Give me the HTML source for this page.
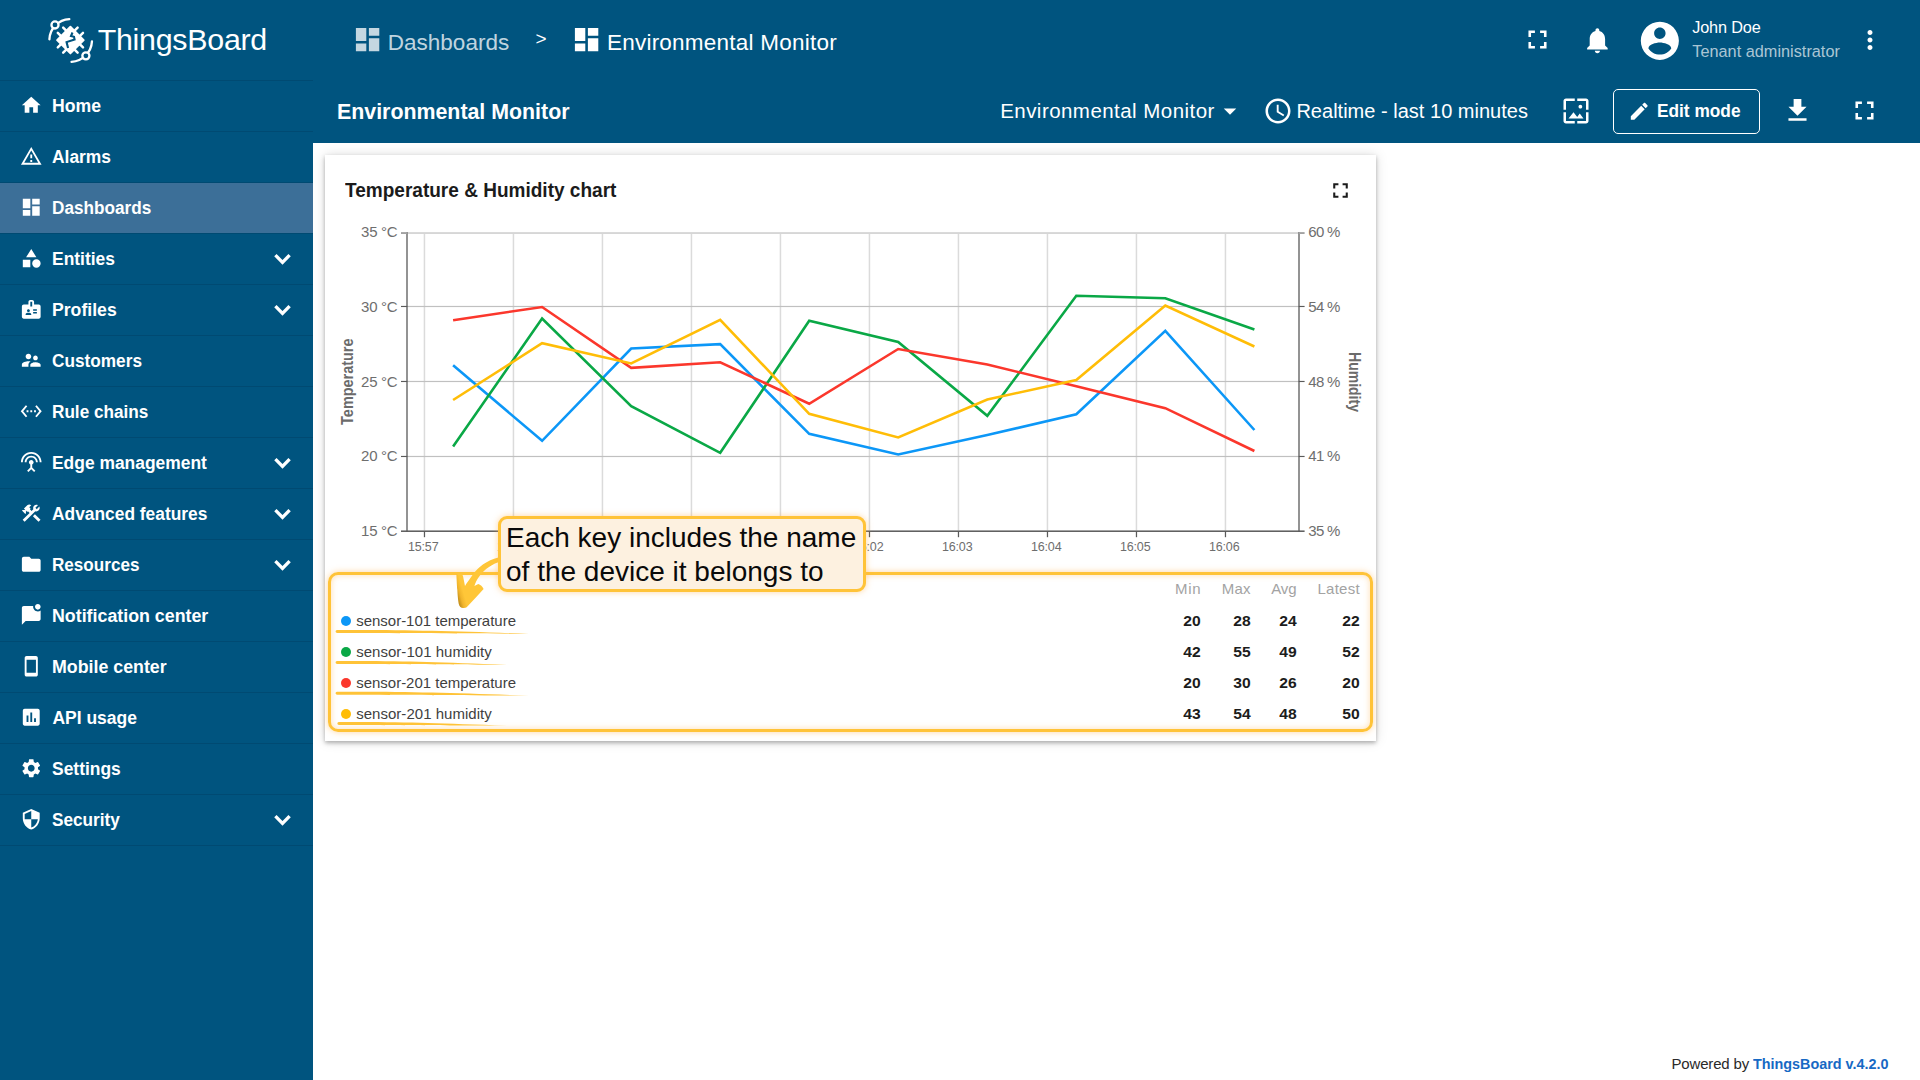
<!DOCTYPE html>
<html lang="en"><head><meta charset="utf-8"><title>ThingsBoard - Environmental Monitor</title>
<style>
html,body{margin:0;padding:0;}
body{width:1920px;height:1080px;overflow:hidden;background:#fff;font-family:'Liberation Sans',sans-serif;position:relative;}
.t{position:absolute;white-space:pre;line-height:1;font-family:'Liberation Sans',sans-serif;}
.abs{position:absolute;}
svg{position:absolute;overflow:visible;}

#side{left:0;top:0;width:313px;height:1080px;background:#00547f;}
#top{left:313px;top:0;width:1607px;height:143px;background:#00547f;}
.div{position:absolute;left:0;width:313px;height:1px;background:#004a72;}
#active{left:0;top:183px;width:313px;height:50px;background:#3c6f98;}
#card{left:325px;top:155px;width:1051px;height:586px;background:#fff;box-shadow:0 2px 4px rgba(0,0,0,.28),0 0 12px rgba(0,0,0,.13);}
#editbtn{left:1613px;top:89px;width:145px;height:43px;border:1px solid #fff;border-radius:5px;}
#hl{left:328px;top:572.2px;width:1039px;height:153.8px;border:3px solid #ffc338;border-radius:10px;box-shadow:0 0 6px rgba(255,176,70,.5), inset 0 0 6px rgba(255,176,70,.42);}
#callout{left:498.3px;top:516px;width:362px;height:70px;border:3px solid #ffc338;border-radius:9px;background:#fdf1e0;box-shadow:0 0 6px rgba(255,176,70,.5);z-index:5;}
.dot{position:absolute;width:10.4px;height:10.4px;border-radius:50%;}

</style></head><body>
<div id="side" class="abs"></div><div id="top" class="abs"></div>
<div id="active" class="abs"></div>
<div class="div" style="top:80px"></div>
<div class="div" style="top:131px"></div>
<div class="div" style="top:182px"></div>
<div class="div" style="top:233px"></div>
<div class="div" style="top:284px"></div>
<div class="div" style="top:335px"></div>
<div class="div" style="top:386px"></div>
<div class="div" style="top:437px"></div>
<div class="div" style="top:488px"></div>
<div class="div" style="top:539px"></div>
<div class="div" style="top:590px"></div>
<div class="div" style="top:641px"></div>
<div class="div" style="top:692px"></div>
<div class="div" style="top:743px"></div>
<div class="div" style="top:794px"></div>
<div class="div" style="top:845px"></div>
<svg style="left:0;top:0" width="313" height="80" viewBox="0 0 313 80"><path d="M69.30 19.13 A21.0 21.0 0 0 0 49.41 39.37" fill="none" stroke="#fff" stroke-width="2.3" stroke-linecap="round"/><path d="M91.96 41.42 A21.9 21.9 0 0 1 71.55 61.97" fill="none" stroke="#fff" stroke-width="2.3" stroke-linecap="round"/><circle cx="54.99" cy="24.96" r="3.55" fill="#00547f" stroke="#fff" stroke-width="2.3"/><circle cx="85.89" cy="55.86" r="3.55" fill="#00547f" stroke="#fff" stroke-width="2.3"/><g transform="translate(70.4 40.1) rotate(45)"><rect x="-10.35" y="-10.35" width="20.7" height="20.7" rx="0.9" fill="#fff"/><path d="M-3.8 -14.0V14.0M-14.0 -3.8H14.0" stroke="#fff" stroke-width="2.5" stroke-linecap="round" fill="none"/><path d="M3.8 -14.0V14.0M-14.0 3.8H14.0" stroke="#fff" stroke-width="2.5" stroke-linecap="round" fill="none"/></g><polyline points="72.50,32.50 71.00,36.00 74.00,36.78 74.56,39.56 66.56,42.11 68.06,47.89" fill="none" stroke="#00547f" stroke-width="2.1" stroke-linejoin="miter" stroke-linecap="butt"/></svg>
<svg style="left:19.95px;top:94.15px;" width="22.5" height="22.5" viewBox="0 0 24 24"><path fill="#fff" d="M10 20v-6h4v6h5v-8h3L12 3 2 12h3v8z"/></svg>
<svg style="left:19.95px;top:145.15px;" width="22.5" height="22.5" viewBox="0 0 24 24"><path fill="#fff" d="M12 5.99L19.53 19H4.47L12 5.99M12 2L1 21h22L12 2zm1 14h-2v2h2v-2zm0-6h-2v4h2v-4z"/></svg>
<svg style="left:19.95px;top:196.15px;" width="22.5" height="22.5" viewBox="0 0 24 24"><path fill="#fff" d="M3 13h8V3H3v10zm0 8h8v-6H3v6zm10 0h8V11h-8v10zm0-18v6h8V3h-8z"/></svg>
<svg style="left:19.95px;top:247.15px;" width="22.5" height="22.5" viewBox="0 0 24 24"><path fill="#fff" d="M12 2l-5.5 9h11L12 2zM17.5 13a4.5 4.5 0 1 0 0 9 4.5 4.5 0 1 0 0-9zM3 13.5h8v8H3v-8z"/></svg>
<svg style="left:19.95px;top:298.15px;" width="22.5" height="22.5" viewBox="0 0 24 24"><path fill="#fff" d="M20 7h-5V4c0-1.1-.9-2-2-2h-2c-1.1 0-2 .9-2 2v3H4c-1.1 0-2 .9-2 2v11c0 1.1.9 2 2 2h16c1.1 0 2-.9 2-2V9c0-1.1-.9-2-2-2zM9 12c.83 0 1.5.67 1.5 1.5S9.83 15 9 15s-1.5-.67-1.5-1.500S8.170 12 9 12zm3 6H6v-.75c0-1 2-1.5 3-1.5s3 .5 3 1.5V18zm1-9h-2V4h2v5zm5 7.5h-4V15h4v1.5zm0-3h-4V12h4v1.5z"/></svg>
<svg style="left:19.95px;top:349.15px;" width="22.5" height="22.5" viewBox="0 0 24 24"><path fill="#fff" d="M16.5 12c1.38 0 2.49-1.12 2.49-2.5S17.88 7 16.5 7C15.12 7 14 8.12 14 9.5s1.120 2.500 2.500 2.500zM9 11c1.660 0 2.990-1.340 2.990-3S10.660 5 9 5C7.340 5 6 6.340 6 8s1.340 3 3 3zm7.500 3c-1.830 0-5.500.920-5.500 2.750V19h11v-2.250c0-1.830-3.670-2.750-5.500-2.750zM9 13c-2.330 0-7 1.170-7 3.500V19h7v-2.250c0-.850.330-2.340 2.370-3.470C10.500 13.100 9.660 13 9 13z"/></svg>
<svg style="left:19.95px;top:400.15px;" width="22.5" height="22.5" viewBox="0 0 24 24"><path fill="#fff" d="M7.77 6.76L6.23 5.48.82 12l5.41 6.52 1.54-1.28L3.42 12l4.35-5.240zM7 13h2v-2H7v2zm10-2h-2v2h2v-2zm-6 2h2v-2h-2v2zm6.770-7.520l-1.540 1.280L20.580 12l-4.350 5.240 1.540 1.280L23.180 12l-5.410-6.520z"/></svg>
<svg style="left:19.95px;top:451.15px;" width="22.5" height="22.5" viewBox="0 0 24 24"><path fill="#fff" d="M12 5c-3.870 0-7 3.130-7 7h2c0-2.760 2.240-5 5-5s5 2.240 5 5h2c0-3.870-3.130-7-7-7zm1 9.290c.880-.390 1.500-1.260 1.500-2.290 0-1.380-1.120-2.500-2.500-2.500S9.500 10.620 9.500 12c0 1.020.620 1.900 1.500 2.290v3.300L7.590 21 9 22.410l3-3 3 3L16.410 21 13 17.590v-3.300zM12 1C5.930 1 1 5.930 1 12h2c0-4.970 4.030-9 9-9s9 4.030 9 9h2c0-6.070-4.930-11-11-11z"/></svg>
<svg style="left:19.95px;top:502.15px;" width="22.5" height="22.5" viewBox="0 0 24 24"><path fill="#fff" d="M13.783 15.172l2.121-2.121 5.996 5.996-2.121 2.121zM17.5 10c1.930 0 3.500-1.570 3.500-3.500 0-.580-.160-1.120-.410-1.600l-2.700 2.700-1.490-1.490 2.700-2.700c-.480-.250-1.020-.410-1.600-.410C15.570 3 14 4.570 14 6.500c0 .410.080.800.210 1.160l-1.850 1.850-1.780-1.780.710-.710-1.410-1.410L12 3.490c-1.170-1.170-3.070-1.170-4.240 0L4.220 7.030l1.410 1.410H2.810l-.710.710 3.540 3.540.710-.710V9.150l1.410 1.410.710-.710 1.780 1.780-7.410 7.410 2.120 2.120L16.340 9.790c.360.130.750.210 1.160.210z"/></svg>
<svg style="left:19.95px;top:553.15px;" width="22.5" height="22.5" viewBox="0 0 24 24"><path fill="#fff" d="M10 4H4c-1.100 0-1.990.900-1.990 2L2 18c0 1.100.900 2 2 2h16c1.100 0 2-.900 2-2V8c0-1.100-.900-2-2-2h-8l-2-2z"/></svg>
<svg style="left:19.95px;top:604.15px;" width="22.5" height="22.5" viewBox="0 0 24 24"><path fill="#fff" d="M22 6.980V16c0 1.100-.900 2-2 2H6l-4 4V4c0-1.100.900-2 2-2h10.100c-.060.320-.100.660-.100 1 0 2.760 2.240 5 5 5 1.130 0 2.160-.390 3-1.020zM16 3c0 1.660 1.340 3 3 3s3-1.340 3-3-1.340-3-3-3-3 1.340-3 3z"/></svg>
<svg style="left:19.95px;top:655.15px;" width="22.5" height="22.5" viewBox="0 0 24 24"><path fill="#fff" d="M17 1.010L7 1c-1.100 0-2 .900-2 2v18c0 1.100.900 2 2 2h10c1.100 0 2-.900 2-2V3c0-1.100-.900-1.990-2-1.990zM17 19H7V5h10v14z"/></svg>
<svg style="left:19.95px;top:706.15px;" width="22.5" height="22.5" viewBox="0 0 24 24"><path fill="#fff" d="M19 3H5c-1.100 0-2 .900-2 2v14c0 1.100.900 2 2 2h14c1.100 0 2-.900 2-2V5c0-1.100-.900-2-2-2zM9 17H7v-7h2v7zm4 0h-2V7h2v10zm4 0h-2v-4h2v4z"/></svg>
<svg style="left:19.95px;top:757.15px;" width="22.5" height="22.5" viewBox="0 0 24 24"><path fill="#fff" d="M19.140 12.940c.040-.300.060-.610.060-.940 0-.320-.020-.640-.070-.940l2.030-1.580c.180-.140.230-.410.120-.610l-1.920-3.320c-.120-.220-.370-.290-.590-.220l-2.390.960c-.500-.380-1.030-.700-1.620-.940l-.360-2.540c-.040-.240-.240-.410-.480-.410h-3.840c-.240 0-.430.170-.470.410l-.360 2.540c-.590.240-1.130.570-1.620.940l-2.390-.960c-.220-.080-.470 0-.590.220L2.740 8.870c-.120.210-.080.470.120.610l2.030 1.580c-.050.300-.090.630-.090.940s.020.640.070.940l-2.030 1.580c-.180.140-.230.410-.120.610l1.920 3.320c.120.220.370.290.590.220l2.390-.960c.500.380 1.030.700 1.620.940l.360 2.540c.050.240.240.410.480.410h3.840c.240 0 .440-.170.470-.410l.360-2.540c.590-.240 1.130-.560 1.620-.940l2.390.960c.220.080.470 0 .590-.220l1.920-3.320c.120-.220.070-.470-.120-.610l-2.010-1.580zM12 15.600c-1.980 0-3.600-1.620-3.600-3.600s1.620-3.600 3.600-3.600 3.600 1.620 3.600 3.600-1.620 3.600-3.600 3.600z"/></svg>
<svg style="left:19.95px;top:808.15px;" width="22.5" height="22.5" viewBox="0 0 24 24"><path fill="#fff" d="M12 1L3 5v6c0 5.550 3.840 10.740 9 12 5.160-1.260 9-6.450 9-12V5l-9-4zm0 10.990h7c-.530 4.120-3.280 7.790-7 8.940V12H5V6.300l7-3.110v8.800z"/></svg>
<svg style="left:0;top:0" width="313" height="1080" viewBox="0 0 313 1080"><polyline points="275.4,255.2 282.5,262.5 289.6,255.2" fill="none" stroke="#fff" stroke-width="3.3" stroke-linejoin="miter" stroke-linecap="butt"/><polyline points="275.4,306.2 282.5,313.5 289.6,306.2" fill="none" stroke="#fff" stroke-width="3.3" stroke-linejoin="miter" stroke-linecap="butt"/><polyline points="275.4,459.2 282.5,466.5 289.6,459.2" fill="none" stroke="#fff" stroke-width="3.3" stroke-linejoin="miter" stroke-linecap="butt"/><polyline points="275.4,510.2 282.5,517.5 289.6,510.2" fill="none" stroke="#fff" stroke-width="3.3" stroke-linejoin="miter" stroke-linecap="butt"/><polyline points="275.4,561.2 282.5,568.5 289.6,561.2" fill="none" stroke="#fff" stroke-width="3.3" stroke-linejoin="miter" stroke-linecap="butt"/><polyline points="275.4,816.2 282.5,823.5 289.6,816.2" fill="none" stroke="#fff" stroke-width="3.3" stroke-linejoin="miter" stroke-linecap="butt"/></svg>
<svg style="left:351.80px;top:24.30px;" width="31.2" height="31.2" viewBox="0 0 24 24"><path fill="rgba(255,255,255,0.77)" d="M3 13h8V3H3v10zm0 8h8v-6H3v6zm10 0h8V11h-8v10zm0-18v6h8V3h-8z"/></svg>
<svg style="left:571.30px;top:24.30px;" width="31.2" height="31.2" viewBox="0 0 24 24"><path fill="#fff" d="M3 13h8V3H3v10zm0 8h8v-6H3v6zm10 0h8V11h-8v10zm0-18v6h8V3h-8z"/></svg>
<svg style="left:1521.90px;top:24.30px;" width="31" height="31" viewBox="0 0 24 24"><path fill="#fff" d="M7 14H5v5h5v-2H7v-3zm-2-4h2V7h3V5H5v5zm12 7h-3v2h5v-5h-2v3zM14 5v2h3v3h2V5h-5z"/></svg>
<svg style="left:1582.00px;top:24.80px;" width="30.8" height="30.8" viewBox="0 0 24 24"><path fill="#fff" d="M12 22c1.100 0 2-.900 2-2h-4c0 1.100.890 2 2 2zm6-6v-5c0-3.070-1.640-5.640-4.500-6.320V4c0-.830-.670-1.500-1.500-1.500s-1.500.670-1.500 1.500v.680C7.630 5.360 6 7.920 6 11v5l-2 2v1h16v-1l-2-2z"/></svg>
<svg style="left:1636.85px;top:17.65px;" width="45.7" height="45.7" viewBox="0 0 24 24"><path fill="#fff" d="M12 2C6.480 2 2 6.480 2 12s4.480 10 10 10 10-4.480 10-10S17.520 2 12 2zm0 3c1.660 0 3 1.340 3 3s-1.340 3-3 3-3-1.340-3-3 1.340-3 3-3zm0 14.200c-2.500 0-4.710-1.280-6-3.220.030-1.990 4-3.080 6-3.080 1.990 0 5.970 1.090 6 3.080-1.290 1.940-3.500 3.220-6 3.220z"/></svg>
<svg style="left:1855.00px;top:25.00px;" width="30" height="30" viewBox="0 0 24 24"><path fill="#fff" d="M12 8c1.100 0 2-.900 2-2s-.900-2-2-2-2 .900-2 2 .900 2 2 2zm0 2c-1.100 0-2 .900-2 2s.900 2 2 2 2-.900 2-2-.900-2-2-2zm0 6c-1.100 0-2 .900-2 2s.900 2 2 2 2-.900 2-2-.900-2-2-2z"/></svg>
<svg style="left:1215.10px;top:95.70px;" width="30" height="30" viewBox="0 0 24 24"><path fill="#fff" d="M7 10l5 5 5-5z"/></svg>
<svg style="left:1262.60px;top:96.00px;" width="30" height="30" viewBox="0 0 24 24"><path fill="#fff" d="M11.990 2C6.470 2 2 6.480 2 12s4.470 10 9.990 10C17.520 22 22 17.520 22 12S17.520 2 11.990 2zM12 20c-4.420 0-8-3.580-8-8s3.580-8 8-8 8 3.580 8 8-3.580 8-8 8zm.500-13H11v6l5.250 3.150.750-1.230-4.500-2.670z"/></svg>
<svg style="left:1560.80px;top:96.20px;" width="30" height="30" viewBox="0 0 24 24"><path fill="#fff" d="M4 4h7V2H4c-1.100 0-2 .900-2 2v7h2V4zm6 9l-4 5h12l-3-4-2.030 2.710L10 13zm7-4.500c0-.830-.670-1.500-1.500-1.500S14 7.670 14 8.500s.670 1.500 1.500 1.500S17 9.330 17 8.500zM20 2h-7v2h7v7h2V4c0-1.100-.900-2-2-2zm0 18h-7v2h7c1.100 0 2-.900 2-2v-7h-2v7zM4 13H2v7c0 1.100.900 2 2 2h7v-2H4v-7z"/></svg>
<div id="editbtn" class="abs"></div>
<svg style="left:1628.05px;top:100.05px;" width="22.5" height="22.5" viewBox="0 0 24 24"><path fill="#fff" d="M3 17.250V21h3.750L17.810 9.940l-3.750-3.750L3 17.250zM20.710 7.040c.390-.390.390-1.020 0-1.410l-2.340-2.340c-.390-.390-1.020-.390-1.410 0l-1.830 1.830 3.750 3.750 1.830-1.830z"/></svg>
<svg style="left:1782.00px;top:95.20px;" width="31" height="31" viewBox="0 0 24 24"><path fill="#fff" d="M19 9h-4V3H9v6H5l7 7 7-7zM5 18v2h14v-2H5z"/></svg>
<svg style="left:1849.30px;top:95.30px;" width="31" height="31" viewBox="0 0 24 24"><path fill="#fff" d="M7 14H5v5h5v-2H7v-3zm-2-4h2V7h3V5H5v5zm12 7h-3v2h5v-5h-2v3zM14 5v2h3v3h2V5h-5z"/></svg>
<div id="card" class="abs"></div>
<svg style="left:1328.30px;top:178.10px;" width="25" height="25" viewBox="0 0 24 24"><path fill="#1b1b1b" d="M7 14H5v5h5v-2H7v-3zm-2-4h2V7h3V5H5v5zm12 7h-3v2h5v-5h-2v3zM14 5v2h3v3h2V5h-5z"/></svg>
<svg style="left:0;top:0" width="1920" height="1080" viewBox="0 0 1920 1080"><rect x="423.70" y="233" width="1.5" height="297.5" fill="#dbdbdb"/><rect x="512.70" y="233" width="1.5" height="297.5" fill="#dbdbdb"/><rect x="601.70" y="233" width="1.5" height="297.5" fill="#dbdbdb"/><rect x="690.70" y="233" width="1.5" height="297.5" fill="#dbdbdb"/><rect x="779.70" y="233" width="1.5" height="297.5" fill="#dbdbdb"/><rect x="868.70" y="233" width="1.5" height="297.5" fill="#dbdbdb"/><rect x="957.70" y="233" width="1.5" height="297.5" fill="#dbdbdb"/><rect x="1046.70" y="233" width="1.5" height="297.5" fill="#dbdbdb"/><rect x="1135.70" y="233" width="1.5" height="297.5" fill="#dbdbdb"/><rect x="1224.70" y="233" width="1.5" height="297.5" fill="#dbdbdb"/><rect x="408" y="232.1" width="890" height="1.9" fill="#d6d6d6"/><rect x="408" y="305.88" width="890" height="1.2" fill="#c0c0c0"/><rect x="408" y="380.88" width="890" height="1.2" fill="#c0c0c0"/><rect x="408" y="455.88" width="890" height="1.2" fill="#c0c0c0"/><rect x="406" y="232" width="2" height="299.8" fill="#939393"/><rect x="1298" y="232" width="2" height="299.8" fill="#939393"/><rect x="401" y="530.45" width="903.6" height="1.5" fill="#5a5a5a"/><rect x="401" y="232.1" width="6" height="1.9" fill="#a2a2a2"/><rect x="1299" y="232.1" width="5.6" height="1.9" fill="#a2a2a2"/><rect x="401" y="305.9" width="6.5" height="1.15" fill="#5a5a5a"/><rect x="1298.5" y="305.9" width="6.1" height="1.15" fill="#5a5a5a"/><rect x="401" y="380.9" width="6.5" height="1.15" fill="#5a5a5a"/><rect x="1298.5" y="380.9" width="6.1" height="1.15" fill="#5a5a5a"/><rect x="401" y="455.9" width="6.5" height="1.15" fill="#5a5a5a"/><rect x="1298.5" y="455.9" width="6.1" height="1.15" fill="#5a5a5a"/><rect x="423.85" y="531" width="1.25" height="6.2" fill="#5a5a5a"/><rect x="512.85" y="531" width="1.25" height="6.2" fill="#5a5a5a"/><rect x="601.85" y="531" width="1.25" height="6.2" fill="#5a5a5a"/><rect x="690.85" y="531" width="1.25" height="6.2" fill="#5a5a5a"/><rect x="779.85" y="531" width="1.25" height="6.2" fill="#5a5a5a"/><rect x="868.85" y="531" width="1.25" height="6.2" fill="#5a5a5a"/><rect x="957.85" y="531" width="1.25" height="6.2" fill="#5a5a5a"/><rect x="1046.85" y="531" width="1.25" height="6.2" fill="#5a5a5a"/><rect x="1135.85" y="531" width="1.25" height="6.2" fill="#5a5a5a"/><rect x="1224.85" y="531" width="1.25" height="6.2" fill="#5a5a5a"/><polyline points="453.1,365.2 542.1,440.8 631.2,348.5 720.2,344.2 809.2,433.8 898.2,454.5 987.3,435.0 1076.3,414.2 1165.3,330.8 1254.4,430.0" fill="none" stroke="#0c97f7" stroke-width="2.6" stroke-linejoin="miter" stroke-linecap="butt"/><polyline points="453.1,446.5 542.1,318.5 631.2,406.2 720.2,452.8 809.2,320.8 898.2,342.0 987.3,415.8 1076.3,295.8 1165.3,298.2 1254.4,329.5" fill="none" stroke="#0aa846" stroke-width="2.6" stroke-linejoin="miter" stroke-linecap="butt"/><polyline points="453.1,320.2 542.1,307.0 631.2,367.8 720.2,362.2 809.2,403.8 898.2,349.0 987.3,364.5 1076.3,386.2 1165.3,408.2 1254.4,451.0" fill="none" stroke="#fb372c" stroke-width="2.6" stroke-linejoin="miter" stroke-linecap="butt"/><polyline points="453.1,400.0 542.1,343.2 631.2,363.5 720.2,319.8 809.2,413.8 898.2,437.5 987.3,399.5 1076.3,380.0 1165.3,305.5 1254.4,346.5" fill="none" stroke="#ffbd07" stroke-width="2.6" stroke-linejoin="miter" stroke-linecap="butt"/><text x="0" y="0" transform="translate(352.6 381.7) rotate(-90)" text-anchor="middle" font-family="Liberation Sans, sans-serif" font-size="16.25" font-weight="700" fill="#6b6b6b" textLength="86.4" lengthAdjust="spacingAndGlyphs">Temperature</text><text x="0" y="0" transform="translate(1349.0 382.0) rotate(90)" text-anchor="middle" font-family="Liberation Sans, sans-serif" font-size="16.25" font-weight="700" fill="#6b6b6b" textLength="59.8" lengthAdjust="spacingAndGlyphs">Humidity</text></svg>
<div class="dot" style="left:340.8px;top:615.6px;background:#0c97f7"></div>
<div class="dot" style="left:340.8px;top:646.6px;background:#0aa846"></div>
<div class="dot" style="left:340.8px;top:677.6px;background:#fb372c"></div>
<div class="dot" style="left:340.8px;top:708.6px;background:#ffbd07"></div>
<span class="t" style="left:97.70px;top:24.27px;font-size:30.4px;color:#fff;letter-spacing:-0.275px;">ThingsBoard</span>
<span class="t" style="left:52.40px;top:98.19px;font-size:17.5px;color:#fff;font-weight:700;transform:scaleX(1.0077);transform-origin:0 0;">Home</span>
<span class="t" style="left:52.40px;top:149.19px;font-size:17.5px;color:#fff;font-weight:700;transform:scaleX(0.9942);transform-origin:0 0;">Alarms</span>
<span class="t" style="left:52.40px;top:200.19px;font-size:17.5px;color:#fff;font-weight:700;transform:scaleX(0.9808);transform-origin:0 0;">Dashboards</span>
<span class="t" style="left:52.40px;top:251.19px;font-size:17.5px;color:#fff;font-weight:700;transform:scaleX(0.9965);transform-origin:0 0;">Entities</span>
<span class="t" style="left:52.40px;top:302.19px;font-size:17.5px;color:#fff;font-weight:700;transform:scaleX(1.0077);transform-origin:0 0;">Profiles</span>
<span class="t" style="left:52.40px;top:353.19px;font-size:17.5px;color:#fff;font-weight:700;transform:scaleX(0.9844);transform-origin:0 0;">Customers</span>
<span class="t" style="left:52.40px;top:404.19px;font-size:17.5px;color:#fff;font-weight:700;transform:scaleX(0.9803);transform-origin:0 0;">Rule chains</span>
<span class="t" style="left:52.40px;top:455.19px;font-size:17.5px;color:#fff;font-weight:700;transform:scaleX(0.9954);transform-origin:0 0;">Edge management</span>
<span class="t" style="left:52.40px;top:506.19px;font-size:17.5px;color:#fff;font-weight:700;transform:scaleX(0.9924);transform-origin:0 0;">Advanced features</span>
<span class="t" style="left:52.40px;top:557.19px;font-size:17.5px;color:#fff;font-weight:700;transform:scaleX(0.9765);transform-origin:0 0;">Resources</span>
<span class="t" style="left:52.40px;top:608.19px;font-size:17.5px;color:#fff;font-weight:700;transform:scaleX(1.0173);transform-origin:0 0;">Notification center</span>
<span class="t" style="left:52.40px;top:659.19px;font-size:17.5px;color:#fff;font-weight:700;transform:scaleX(1.0167);transform-origin:0 0;">Mobile center</span>
<span class="t" style="left:52.40px;top:710.19px;font-size:17.5px;color:#fff;font-weight:700;">API usage</span>
<span class="t" style="left:52.40px;top:761.19px;font-size:17.5px;color:#fff;font-weight:700;transform:scaleX(0.9964);transform-origin:0 0;">Settings</span>
<span class="t" style="left:52.40px;top:812.19px;font-size:17.5px;color:#fff;font-weight:700;transform:scaleX(0.9832);transform-origin:0 0;">Security</span>
<span class="t" style="left:387.70px;top:31.95px;font-size:22.5px;color:rgba(255,255,255,0.77);letter-spacing:0.027px;">Dashboards</span>
<span class="t" style="left:535.50px;top:29.12px;font-size:19px;color:#fff;">&gt;</span>
<span class="t" style="left:606.90px;top:31.95px;font-size:22.5px;color:#fff;letter-spacing:0.242px;">Environmental Monitor</span>
<span class="t" style="left:1692.20px;top:19.14px;font-size:16.25px;color:#fff;letter-spacing:-0.145px;">John Doe</span>
<span class="t" style="left:1692.30px;top:43.04px;font-size:16.25px;color:rgba(255,255,255,0.68);letter-spacing:0.018px;">Tenant administrator</span>
<span class="t" style="left:337.30px;top:100.65px;font-size:22.5px;color:#fff;font-weight:700;transform:scaleX(0.9489);transform-origin:0 0;">Environmental Monitor</span>
<span class="t" style="left:1000.20px;top:100.55px;font-size:20.5px;color:#fff;letter-spacing:0.453px;">Environmental Monitor</span>
<span class="t" style="left:1296.40px;top:100.97px;font-size:20px;color:#fff;letter-spacing:0.015px;">Realtime - last 10 minutes</span>
<span class="t" style="left:1657.00px;top:102.59px;font-size:17.5px;color:#fff;font-weight:700;transform:scaleX(0.9871);transform-origin:0 0;">Edit mode</span>
<span class="t" style="left:344.90px;top:179.57px;font-size:20px;color:#1b1b1b;font-weight:700;transform:scaleX(0.9514);transform-origin:0 0;">Temperature &amp; Humidity chart</span>
<span class="t" style="left:361.10px;top:223.50px;font-size:15px;color:#6e6e6e;letter-spacing:-0.297px;">35 °C</span>
<span class="t" style="left:361.10px;top:298.50px;font-size:15px;color:#6e6e6e;letter-spacing:-0.297px;">30 °C</span>
<span class="t" style="left:361.10px;top:373.50px;font-size:15px;color:#6e6e6e;letter-spacing:-0.297px;">25 °C</span>
<span class="t" style="left:361.10px;top:448.10px;font-size:15px;color:#6e6e6e;letter-spacing:-0.297px;">20 °C</span>
<span class="t" style="left:361.10px;top:522.90px;font-size:15px;color:#6e6e6e;letter-spacing:-0.297px;">15 °C</span>
<span class="t" style="left:1308.30px;top:223.50px;font-size:15px;color:#6e6e6e;letter-spacing:-0.676px;">60 %</span>
<span class="t" style="left:1308.30px;top:298.50px;font-size:15px;color:#6e6e6e;letter-spacing:-0.676px;">54 %</span>
<span class="t" style="left:1308.30px;top:373.50px;font-size:15px;color:#6e6e6e;letter-spacing:-0.676px;">48 %</span>
<span class="t" style="left:1308.30px;top:448.10px;font-size:15px;color:#6e6e6e;letter-spacing:-0.676px;">41 %</span>
<span class="t" style="left:1308.30px;top:522.90px;font-size:15px;color:#6e6e6e;letter-spacing:-0.676px;">35 %</span>
<span class="t" style="left:407.90px;top:541.22px;font-size:12.5px;color:#6e6e6e;letter-spacing:-0.136px;">15:57</span>
<span class="t" style="left:496.90px;top:541.22px;font-size:12.5px;color:#6e6e6e;letter-spacing:-0.136px;">15:58</span>
<span class="t" style="left:585.90px;top:541.22px;font-size:12.5px;color:#6e6e6e;letter-spacing:-0.136px;">15:59</span>
<span class="t" style="left:674.90px;top:541.22px;font-size:12.5px;color:#6e6e6e;letter-spacing:-0.136px;">16:00</span>
<span class="t" style="left:763.90px;top:541.22px;font-size:12.5px;color:#6e6e6e;letter-spacing:-0.136px;">16:01</span>
<span class="t" style="left:852.90px;top:541.22px;font-size:12.5px;color:#6e6e6e;letter-spacing:-0.136px;">16:02</span>
<span class="t" style="left:941.90px;top:541.22px;font-size:12.5px;color:#6e6e6e;letter-spacing:-0.136px;">16:03</span>
<span class="t" style="left:1030.90px;top:541.22px;font-size:12.5px;color:#6e6e6e;letter-spacing:-0.136px;">16:04</span>
<span class="t" style="left:1119.90px;top:541.22px;font-size:12.5px;color:#6e6e6e;letter-spacing:-0.136px;">16:05</span>
<span class="t" style="left:1208.90px;top:541.22px;font-size:12.5px;color:#6e6e6e;letter-spacing:-0.136px;">16:06</span>
<span class="t" style="left:1175.08px;top:580.80px;font-size:15px;color:#a3a3a3;letter-spacing:0.676px;">Min</span>
<span class="t" style="left:1221.82px;top:580.80px;font-size:15px;color:#a3a3a3;letter-spacing:0.219px;">Max</span>
<span class="t" style="left:1271.14px;top:580.80px;font-size:15px;color:#a3a3a3;letter-spacing:-0.059px;">Avg</span>
<span class="t" style="left:1317.45px;top:580.80px;font-size:15px;color:#a3a3a3;letter-spacing:0.254px;">Latest</span>
<span class="t" style="left:356.20px;top:613.10px;font-size:15px;color:#3f3f3f;letter-spacing:-0.013px;">sensor-101 temperature</span>
<span class="t" style="left:1183.91px;top:612.70px;font-size:15px;color:#1c1c1c;font-weight:700;transform:scaleX(1.0427);transform-origin:100% 0;">20</span>
<span class="t" style="left:1233.91px;top:612.70px;font-size:15px;color:#1c1c1c;font-weight:700;transform:scaleX(1.0427);transform-origin:100% 0;">28</span>
<span class="t" style="left:1279.91px;top:612.70px;font-size:15px;color:#1c1c1c;font-weight:700;transform:scaleX(1.0427);transform-origin:100% 0;">24</span>
<span class="t" style="left:1342.91px;top:612.70px;font-size:15px;color:#1c1c1c;font-weight:700;transform:scaleX(1.0427);transform-origin:100% 0;">22</span>
<span class="t" style="left:356.20px;top:644.10px;font-size:15px;color:#3f3f3f;letter-spacing:0.027px;">sensor-101 humidity</span>
<span class="t" style="left:1183.91px;top:643.70px;font-size:15px;color:#1c1c1c;font-weight:700;transform:scaleX(1.0427);transform-origin:100% 0;">42</span>
<span class="t" style="left:1233.91px;top:643.70px;font-size:15px;color:#1c1c1c;font-weight:700;transform:scaleX(1.0427);transform-origin:100% 0;">55</span>
<span class="t" style="left:1279.91px;top:643.70px;font-size:15px;color:#1c1c1c;font-weight:700;transform:scaleX(1.0427);transform-origin:100% 0;">49</span>
<span class="t" style="left:1342.91px;top:643.70px;font-size:15px;color:#1c1c1c;font-weight:700;transform:scaleX(1.0427);transform-origin:100% 0;">52</span>
<span class="t" style="left:356.20px;top:675.10px;font-size:15px;color:#3f3f3f;letter-spacing:-0.013px;">sensor-201 temperature</span>
<span class="t" style="left:1183.91px;top:674.70px;font-size:15px;color:#1c1c1c;font-weight:700;transform:scaleX(1.0427);transform-origin:100% 0;">20</span>
<span class="t" style="left:1233.91px;top:674.70px;font-size:15px;color:#1c1c1c;font-weight:700;transform:scaleX(1.0427);transform-origin:100% 0;">30</span>
<span class="t" style="left:1279.91px;top:674.70px;font-size:15px;color:#1c1c1c;font-weight:700;transform:scaleX(1.0427);transform-origin:100% 0;">26</span>
<span class="t" style="left:1342.91px;top:674.70px;font-size:15px;color:#1c1c1c;font-weight:700;transform:scaleX(1.0427);transform-origin:100% 0;">20</span>
<span class="t" style="left:356.20px;top:706.10px;font-size:15px;color:#3f3f3f;letter-spacing:0.027px;">sensor-201 humidity</span>
<span class="t" style="left:1183.91px;top:705.70px;font-size:15px;color:#1c1c1c;font-weight:700;transform:scaleX(1.0427);transform-origin:100% 0;">43</span>
<span class="t" style="left:1233.91px;top:705.70px;font-size:15px;color:#1c1c1c;font-weight:700;transform:scaleX(1.0427);transform-origin:100% 0;">54</span>
<span class="t" style="left:1279.91px;top:705.70px;font-size:15px;color:#1c1c1c;font-weight:700;transform:scaleX(1.0427);transform-origin:100% 0;">48</span>
<span class="t" style="left:1342.91px;top:705.70px;font-size:15px;color:#1c1c1c;font-weight:700;transform:scaleX(1.0427);transform-origin:100% 0;">50</span>
<span class="t" style="left:506.00px;top:524.00px;font-size:28px;color:#0a0a0a;z-index:6;">Each key includes the name</span>
<span class="t" style="left:506.00px;top:557.90px;font-size:28px;color:#0a0a0a;z-index:6;">of the device it belongs to</span>
<span class="t" style="left:1671.50px;top:1055.70px;font-size:15px;color:#2a2a2a;letter-spacing:-0.172px;">Powered by </span>
<span class="t" style="left:1753.00px;top:1055.70px;font-size:15px;color:#1769c4;font-weight:700;transform:scaleX(0.9580);transform-origin:0 0;">ThingsBoard v.4.2.0</span>
<div id="hl" class="abs"></div>
<svg style="left:0;top:0;z-index:4" width="1920" height="1080" viewBox="0 0 1920 1080"><path d="M337.0 630.05 C405.8 629.70 453.8 631.10 528.8 633.80 C443.8 633.30 410.8 633.25 337.2 633.00 C335.1 632.70 335.1 630.30 337.0 630.05Z" fill="#ffc338"/><path d="M337.0 660.95 C405.8 660.60 432.0 662.00 507.0 664.70 C422.0 664.20 410.8 664.15 337.2 663.90 C335.1 663.60 335.1 661.20 337.0 660.95Z" fill="#ffc338"/><path d="M337.0 691.85 C405.8 691.50 453.8 692.90 528.8 695.70 C443.8 695.20 410.8 695.05 337.2 694.80 C335.1 694.50 335.1 692.10 337.0 691.85Z" fill="#ffc338"/><path d="M338.8 721.95 C407.6 721.60 432.0 723.00 507.0 725.60 C422.0 725.10 412.6 725.15 339.0 724.90 C336.9 724.60 336.9 722.20 338.8 721.95Z" fill="#ffc338"/><defs><linearGradient id="ag" gradientUnits="userSpaceOnUse" x1="455.5" y1="590" x2="469" y2="586"><stop offset="0" stop-color="#c8921c"/><stop offset="0.22" stop-color="#f0b42c"/><stop offset="0.5" stop-color="#ffc638"/><stop offset="1" stop-color="#ffc638"/></linearGradient></defs><path d="M498.3 557.5 C487 560 478 567.5 472.7 574.7 C469.5 579 466.8 583 465 585.9 L463.2 577 C462.8 574.5 461.5 573.6 459.9 573.8 C458.3 573.7 456.6 573.6 456.4 574.4 C456.6 580 457 587 457.3 589.5 C457.6 596 458.2 601 458.7 603.7 C459.5 607 461.5 608.3 463.8 607.9 C465 607.9 466 607.8 466.7 607.3 L475.6 597.8 L483.6 588.9 C482.5 586.6 480.5 584.8 478.3 584.1 L474.4 585.9 C475.5 582.5 477 579.3 479.2 576.4 C482.5 571.8 489 565.5 498.3 562.2 Z" fill="url(#ag)"/></svg>
<div id="callout" class="abs"></div>
</body></html>
